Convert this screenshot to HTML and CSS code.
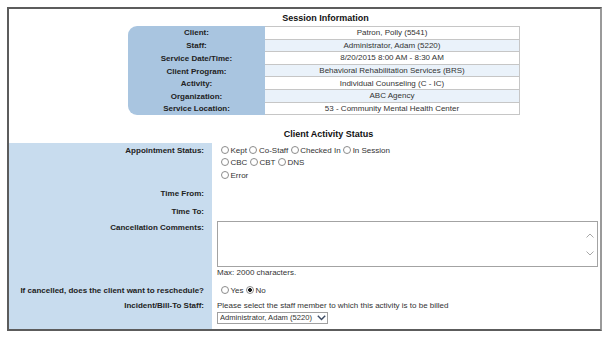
FILE: index.html
```html
<!DOCTYPE html>
<html lang="en">
<head>
    <meta charset="UTF-8">
    <meta name="viewport" content="width=device-width, initial-scale=1.0">
    <title>Client Activity</title>
    <link rel="stylesheet" href="styles.css">
</head>
<body>
    <div class="frame">
        <h2 class="section-title">Session Information</h2>
        <table class="session">
            <tr><td class="label">Client:</td><td class="value">Patron, Polly (5541)</td></tr>
            <tr><td class="label">Staff:</td><td class="value">Administrator, Adam (5220)</td></tr>
            <tr><td class="label">Service Date/Time:</td><td class="value">8/20/2015 8:00 AM - 8:30 AM</td></tr>
            <tr><td class="label">Client Program:</td><td class="value">Behavioral Rehabilitation Services (BRS)</td></tr>
            <tr><td class="label">Activity:</td><td class="value">Individual Counseling (C - IC)</td></tr>
            <tr><td class="label">Organization:</td><td class="value">ABC Agency</td></tr>
            <tr><td class="label">Service Location:</td><td class="value">53 - Community Mental Health Center</td></tr>
        </table>

        <h2 class="section-title second">Client Activity Status</h2>
        <table class="status">
            <tr class="row-appt">
                <td class="label top">Appointment Status:</td>
                <td class="field top">
                    <div class="radio-line"><span class="radio"></span>Kept<span class="radio"></span>Co-Staff<span class="radio"></span>Checked In<span class="radio"></span>In Session</div>
                    <div class="radio-line"><span class="radio"></span>CBC<span class="radio"></span>CBT<span class="radio"></span>DNS</div>
                    <div class="radio-line"><span class="radio"></span>Error</div>
                </td>
            </tr>
            <tr class="row-from">
                <td class="label">Time From:</td>
                <td class="field"></td>
            </tr>
            <tr class="row-to">
                <td class="label">Time To:</td>
                <td class="field"></td>
            </tr>
            <tr class="row-comments">
                <td class="label top">Cancellation Comments:</td>
                <td class="field top">
                    <div class="comment-box">
                        <textarea></textarea>
                        <svg class="scroll-arrow up" width="8" height="5" viewBox="0 0 8 5"><path d="M0.5 4.5 L4 1 L7.5 4.5" fill="none" stroke="#a8a8a8" stroke-width="1"/></svg>
                        <svg class="scroll-arrow down" width="8" height="5" viewBox="0 0 8 5"><path d="M0.5 0.5 L4 4 L7.5 0.5" fill="none" stroke="#a8a8a8" stroke-width="1"/></svg>
                    </div>
                    <div class="hint">Max: 2000 characters.</div>
                </td>
            </tr>
            <tr class="row-resched">
                <td class="label">If cancelled, does the client want to reschedule?</td>
                <td class="field">
                    <div class="radio-line"><span class="radio"></span>Yes<span class="radio on"></span>No</div>
                </td>
            </tr>
            <tr class="row-staff">
                <td class="label top">Incident/Bill-To Staff:</td>
                <td class="field top">
                    <div class="hint">Please select the staff member to which this activity is to be billed</div>
                    <div class="select-wrap">
                        <select class="select">
                            <option>Administrator, Adam (5220)</option>
                        </select>
                        <svg class="select-arrow" width="9" height="6" viewBox="0 0 9 6"><path d="M0.8 0.8 L4.5 4.6 L8.2 0.8" fill="none" stroke="#3b4a63" stroke-width="1.4"/></svg>
                    </div>
                </td>
            </tr>
        </table>
    </div>
</body>
</html>
```

FILE: styles.css
```css
body {
    margin: 0;
    padding: 7px;
    font-family: "Liberation Sans", Arial, sans-serif;
    font-size: 8px;
    color: #222;
    background: #fff;
}
.frame {
    width: 591px;
    height: 320px;
    border: 2px solid #5c5c5c;
    border-right-color: #9a9a9a;
    overflow: hidden;
}
.section-title {
    margin: 3.5px 0 2.5px;
    padding-left: 42px;
    font-size: 9px;
    line-height: 11px;
    font-weight: bold;
    text-align: center;
    color: #111;
}
.section-title.second {
    margin-top: 14.3px;
    padding-left: 48px;
}
.session {
    margin-left: 119px;
    width: 392px;
    border-collapse: separate;
    border-spacing: 0;
}
.session td {
    height: 11.6px;
    padding: 0;
    line-height: 11px;
    text-align: center;
}
.session .label {
    width: 137px;
    background: #a9c5e0;
    font-weight: bold;
}
.session tr:first-child .label {
    border-top-left-radius: 9px;
}
.session tr:last-child .label {
    border-bottom-left-radius: 9px;
}
.session .value {
    color: #333;
    border-right: 1px solid #c6c6c6;
    border-bottom: 1px solid #c6c6c6;
}
.session tr:first-child .value {
    border-top: 1px solid #c6c6c6;
}
.session tr:nth-child(even) .value {
    background: #eaf2fa;
}
.status {
    width: 100%;
    border-collapse: collapse;
    border-spacing: 0;
}
.status td {
    padding: 0;
    vertical-align: middle;
    line-height: 11px;
}
.status .label {
    width: 195px;
    padding-right: 8px;
    text-align: right;
    font-weight: bold;
    background: #c8dcee;
}
.status .field {
    padding-left: 5px;
}
.row-appt { height: 42px; }
.row-from { height: 18px; }
.row-to { height: 17px; }
.row-comments { height: 63px; }
.row-resched { height: 16px; }
.row-staff { height: 30px; }
.row-appt td.top {
    vertical-align: top;
    padding-top: 2px;
}
.row-appt .label {
    line-height: 12.5px;
}
.row-comments td.top {
    vertical-align: top;
    padding-top: 1px;
}
.row-comments .label.top {
    padding-top: 2.5px;
}
.row-staff td.top {
    vertical-align: top;
    padding-top: 1px;
}
.radio-line {
    height: 12.5px;
    line-height: 12.5px;
    padding-left: 2px;
    white-space: nowrap;
    color: #333;
}
.radio {
    display: inline-block;
    width: 6px;
    height: 6px;
    margin: 0 1.5px 0 2.5px;
    border: 1px solid #8c8c8c;
    border-radius: 50%;
    background: #fff;
    vertical-align: -1px;
}
.radio:first-child {
    margin-left: 2px;
}
.radio.on {
    background: radial-gradient(circle, #1e1e1e 0, #1e1e1e 1.6px, #fff 2.2px);
}
.comment-box {
    position: relative;
    width: 381px;
    height: 46px;
}
.comment-box textarea {
    display: block;
    box-sizing: border-box;
    width: 100%;
    height: 100%;
    margin: 0;
    padding: 2px;
    border: 1px solid #a3a3a3;
    resize: none;
    font: inherit;
    background: #fff;
}
.scroll-arrow {
    position: absolute;
    right: 4px;
}
.scroll-arrow.up { top: 12px; }
.scroll-arrow.down { top: 30px; }
.hint {
    line-height: 11px;
    color: #333;
}
.row-comments .hint {
    margin-top: 0.5px;
}
.select-wrap {
    position: relative;
    display: inline-block;
    margin-top: 1px;
}
.select {
    display: block;
    box-sizing: border-box;
    width: 111px;
    height: 12px;
    margin: 0;
    padding: 0 12px 0 2px;
    border: 1px solid #a0a0a0;
    border-radius: 0;
    appearance: none;
    -webkit-appearance: none;
    background: #fff;
    font-family: inherit;
    font-size: 7.6px;
    line-height: 10px;
    color: #333;
}
.select-arrow {
    position: absolute;
    right: 2px;
    top: 3px;
}
```
